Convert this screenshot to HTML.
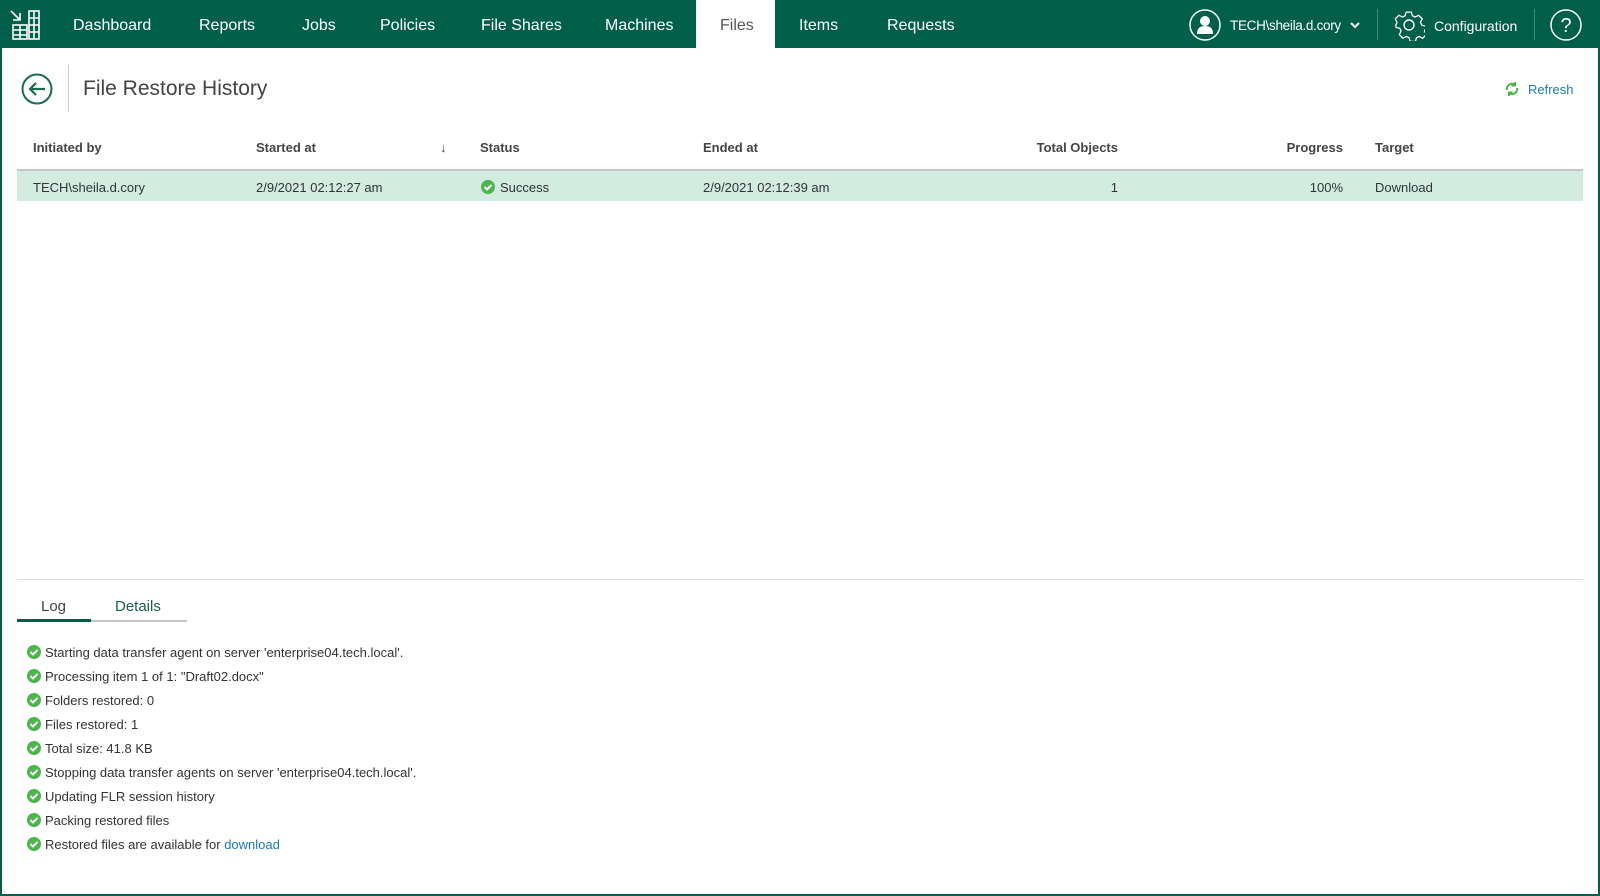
<!DOCTYPE html>
<html><head><style>
*{margin:0;padding:0;box-sizing:border-box}
body{width:1600px;height:896px;overflow:hidden;font-family:"Liberation Sans",sans-serif;color:#333;background:#fff;position:relative}
.frame{position:absolute;left:0;top:0;width:1600px;height:896px;border:2px solid #005f4b;border-top:none}
.nav{position:absolute;left:0;top:0;width:1600px;height:48px;background:#005f4b;color:#fff;font-size:16px}
.nav span{position:absolute;top:17px;white-space:nowrap}
.abs{position:absolute;white-space:nowrap}
.th{position:absolute;top:140px;font-size:13px;font-weight:bold;color:#444}
.td{position:absolute;top:180px;font-size:13px}
.log{position:absolute;left:27px;font-size:13px}
.log div{height:24px;display:flex;align-items:center}
.log svg{margin-right:4px}
</style></head><body>
<div class="frame"></div>
<div class="nav">
<svg class="abs" style="left:9px;top:9px" width="32" height="32" viewBox="0 0 32 32" fill="none" stroke="#fff" stroke-width="1.6">
<path d="M2 2l9 9M11 4v7H4"/><rect x="20" y="2" width="10" height="28"/><path d="M20 9h10M20 16h10M20 23h10M25 2v28"/><rect x="4" y="16" width="14" height="14"/><path d="M4 21h14M4 26h14M11 16v14"/></svg>
<span style="left:73px">Dashboard</span>
<span style="left:199px">Reports</span>
<span style="left:302px">Jobs</span>
<span style="left:380px">Policies</span>
<span style="left:481px">File Shares</span>
<span style="left:605px">Machines</span>
<div class="abs" style="left:696px;top:0;width:79px;height:48px;background:#fff"></div>
<span style="left:720px;color:#555">Files</span>
<span style="left:799px">Items</span>
<span style="left:887px">Requests</span>
<svg class="abs" style="left:1189px;top:9px" width="32" height="32" viewBox="0 0 32 32"><circle cx="16" cy="16" r="15" fill="none" stroke="#fff" stroke-width="1.5"/><circle cx="16" cy="12" r="5" fill="#fff"/><path d="M8 25c0-6 3-8 8-8s8 2 8 8z" fill="#fff"/></svg>
<span style="left:1230px;top:18px;font-size:13.5px;letter-spacing:-0.3px">TECH\sheila.d.cory</span>
<svg class="abs" style="left:1350px;top:22px" width="10" height="8"><path d="M1 1l4 4 4-4" stroke="#fff" stroke-width="2" fill="none"/></svg>
<div class="abs" style="left:1377px;top:9px;width:1px;height:31px;background:#3d8a78"></div>
<svg class="abs" style="left:1393px;top:9px" width="32" height="32" viewBox="0 0 32 32" fill="none" stroke="#fff" stroke-width="1.4"><path d="M13 2h6l1 4 3 1.5 4-2 4 4-2 4 1.5 3 4 1v0M13 2l-1 4-3 1.5-4-2-4 4 2 4L1.5 16.5 2 19l4 1 1.5 3-2 4 4 4 4-2 3 1.5 1 4h6l1-4 3-1.5 4 2 4-4-2-4 1.5-3 4-1v-6l-4-1" transform="scale(0.9) translate(1.5 1.5)"/><circle cx="16" cy="16" r="5"/></svg>
<span style="left:1434px;top:18px;font-size:14px">Configuration</span>
<div class="abs" style="left:1534px;top:9px;width:1px;height:31px;background:#3d8a78"></div>
<svg class="abs" style="left:1550px;top:9px" width="32" height="32" viewBox="0 0 32 32"><circle cx="16" cy="16" r="15" fill="none" stroke="#fff" stroke-width="1.5"/><text x="16" y="23" text-anchor="middle" fill="#fff" font-size="20" font-family="Liberation Sans">?</text></svg>
</div>

<svg class="abs" style="left:21px;top:73px" width="32" height="32" viewBox="0 0 32 32"><circle cx="16" cy="16" r="14.5" fill="none" stroke="#1d6b55" stroke-width="2"/><path d="M24 16H9M15 10l-6 6 6 6" fill="none" stroke="#1d6b55" stroke-width="2.2"/></svg>
<div class="abs" style="left:68px;top:65px;width:1px;height:47px;background:#ccc"></div>
<div class="abs" style="left:83px;top:77px;font-size:21px;color:#444">File Restore History</div>
<svg class="abs" style="left:1504px;top:81px" width="16" height="16" viewBox="0 0 16 16" fill="none" stroke="#4cb64c" stroke-width="2"><path d="M3 9a5 5 0 0 1 8-5M13 7a5 5 0 0 1-8 5"/><path d="M11 1v3.5h-3.5M5 15v-3.5h3.5"/></svg>
<div class="abs" style="left:1528px;top:82px;font-size:13px;color:#1a7ab8">Refresh</div>

<div class="th" style="left:33px">Initiated by</div>
<div class="th" style="left:256px">Started at</div>
<div class="th" style="left:440px;font-weight:normal">&#8595;</div>
<div class="th" style="left:480px">Status</div>
<div class="th" style="left:703px">Ended at</div>
<div class="th" style="right:482px">Total Objects</div>
<div class="th" style="right:257px">Progress</div>
<div class="th" style="left:1375px">Target</div>
<div class="abs" style="left:17px;top:169px;width:1566px;height:2px;background:#c6c6c6"></div>
<div class="abs" style="left:17px;top:171px;width:1566px;height:30px;background:#d2ece1"></div>
<div class="td" style="left:33px">TECH\sheila.d.cory</div>
<div class="td" style="left:256px">2/9/2021 02:12:27 am</div>
<svg class="abs" style="left:481px;top:180px" width="14" height="14" viewBox="0 0 14 14"><circle cx="7" cy="7" r="7" fill="#4cb64c"/><path d="M3.5 7l2.5 2.5 4.5-4.5" stroke="#fff" stroke-width="2" fill="none"/></svg>
<div class="td" style="left:500px">Success</div>
<div class="td" style="left:703px">2/9/2021 02:12:39 am</div>
<div class="td" style="right:482px">1</div>
<div class="td" style="right:257px">100%</div>
<div class="td" style="left:1375px">Download</div>

<div class="abs" style="left:17px;top:579px;width:1566px;height:1px;background:#ddd"></div>
<div class="abs" style="left:41px;top:598px;font-size:15px;color:#444">Log</div>
<div class="abs" style="left:115px;top:598px;font-size:15px;color:#1d5e4d">Details</div>
<div class="abs" style="left:17px;top:620px;width:170px;height:2px;background:#c6c6c6"></div>
<div class="abs" style="left:17px;top:619px;width:74px;height:3px;background:#005f4b"></div>

<div class="log" style="top:640px">
<div><svg width="14" height="14" viewBox="0 0 14 14"><circle cx="7" cy="7" r="7" fill="#4cb64c"/><path d="M3.5 7l2.5 2.5 4.5-4.5" stroke="#fff" stroke-width="2" fill="none"/></svg>Starting data transfer agent on server 'enterprise04.tech.local'.</div>
<div><svg width="14" height="14" viewBox="0 0 14 14"><circle cx="7" cy="7" r="7" fill="#4cb64c"/><path d="M3.5 7l2.5 2.5 4.5-4.5" stroke="#fff" stroke-width="2" fill="none"/></svg>Processing item 1 of 1: "Draft02.docx"</div>
<div><svg width="14" height="14" viewBox="0 0 14 14"><circle cx="7" cy="7" r="7" fill="#4cb64c"/><path d="M3.5 7l2.5 2.5 4.5-4.5" stroke="#fff" stroke-width="2" fill="none"/></svg>Folders restored: 0</div>
<div><svg width="14" height="14" viewBox="0 0 14 14"><circle cx="7" cy="7" r="7" fill="#4cb64c"/><path d="M3.5 7l2.5 2.5 4.5-4.5" stroke="#fff" stroke-width="2" fill="none"/></svg>Files restored: 1</div>
<div><svg width="14" height="14" viewBox="0 0 14 14"><circle cx="7" cy="7" r="7" fill="#4cb64c"/><path d="M3.5 7l2.5 2.5 4.5-4.5" stroke="#fff" stroke-width="2" fill="none"/></svg>Total size: 41.8 KB</div>
<div><svg width="14" height="14" viewBox="0 0 14 14"><circle cx="7" cy="7" r="7" fill="#4cb64c"/><path d="M3.5 7l2.5 2.5 4.5-4.5" stroke="#fff" stroke-width="2" fill="none"/></svg>Stopping data transfer agents on server 'enterprise04.tech.local'.</div>
<div><svg width="14" height="14" viewBox="0 0 14 14"><circle cx="7" cy="7" r="7" fill="#4cb64c"/><path d="M3.5 7l2.5 2.5 4.5-4.5" stroke="#fff" stroke-width="2" fill="none"/></svg>Updating FLR session history</div>
<div><svg width="14" height="14" viewBox="0 0 14 14"><circle cx="7" cy="7" r="7" fill="#4cb64c"/><path d="M3.5 7l2.5 2.5 4.5-4.5" stroke="#fff" stroke-width="2" fill="none"/></svg>Packing restored files</div>
<div><svg width="14" height="14" viewBox="0 0 14 14"><circle cx="7" cy="7" r="7" fill="#4cb64c"/><path d="M3.5 7l2.5 2.5 4.5-4.5" stroke="#fff" stroke-width="2" fill="none"/></svg>Restored files are available for&nbsp;<span style="color:#1a7ab8">download</span></div>
</div>
</body></html>
